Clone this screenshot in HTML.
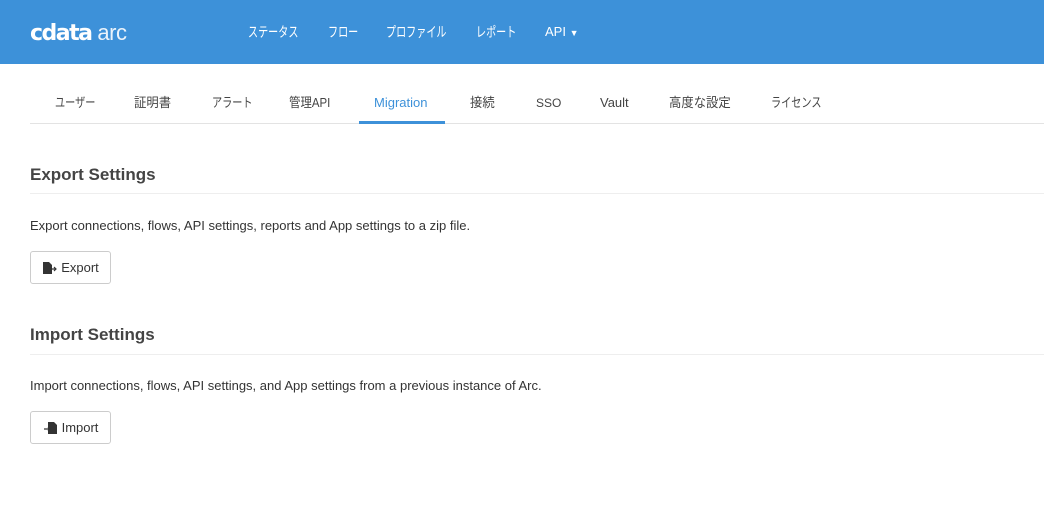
<!DOCTYPE html>
<html><head><meta charset="utf-8"><style>
*{margin:0;padding:0;box-sizing:border-box}
body{width:1044px;height:506px;background:#fff;font-family:"Liberation Sans","Noto Sans CJK JP",sans-serif;color:#333;position:relative;overflow:hidden}
.hdr{position:absolute;left:0;top:0;width:1044px;height:64px;background:#3d91d9}
.logo{position:absolute;left:30px;top:18px;color:#fff;font-size:23px;letter-spacing:-0.5px;line-height:28px}
.logo b{font-weight:bold;font-family:"DejaVu Sans",sans-serif;letter-spacing:-1.5px;font-size:22px}
.logo span{font-weight:normal;font-size:22px;color:#eaf3fb}
.nav{position:absolute;top:23px;color:#fff;font-size:14px;line-height:18px;white-space:nowrap;transform-origin:left center}
.cj{transform:scaleX(0.72)}
.tab{position:absolute;top:95px;font-size:13px;line-height:16px;color:#444;white-space:nowrap;transform-origin:left center}
.tc{transform:scaleX(0.78)}
.tk{transform:scaleX(0.95)}
.tabline{position:absolute;left:30px;top:123px;width:1014px;height:1px;background:#e3e3e3}
.act{position:absolute;left:359px;top:121px;width:86px;height:3px;background:#3d91d9}
h2{position:absolute;left:30px;font-size:17px;line-height:22px;font-weight:bold;color:#444}
.hr{position:absolute;left:30px;width:1014px;height:1px;background:#eee}
p{position:absolute;left:30px;font-size:13px;line-height:16px;color:#333}
.btn{position:absolute;left:30px;width:81px;height:33px;border:1px solid #ccc;border-radius:3px;font-size:13px;color:#333;display:flex;align-items:center;justify-content:center;gap:3px}
</style></head><body>
<div class="hdr">
<div class="logo"><b>cdata</b> <span>arc</span></div>
<div class="nav cj" style="left:248px">ステータス</div>
<div class="nav cj" style="left:328px">フロー</div>
<div class="nav cj" style="left:386px">プロファイル</div>
<div class="nav cj" style="left:476px">レポート</div>
<div class="nav" style="left:545px;font-size:13px">API <span style="font-size:9px">▼</span></div>
</div>
<div class="tab tc" style="left:55px">ユーザー</div>
<div class="tab tk" style="left:134px">証明書</div>
<div class="tab tc" style="left:212px">アラート</div>
<div class="tab tk" style="left:289px;transform:scaleX(0.88)">管理API</div>
<div class="tab" style="left:374px;color:#3d91d9">Migration</div>
<div class="tab tk" style="left:470px">接続</div>
<div class="tab" style="left:536px;font-size:12px">SSO</div>
<div class="tab" style="left:600px">Vault</div>
<div class="tab tk" style="left:669px">高度な設定</div>
<div class="tab tc" style="left:771px">ライセンス</div>
<div class="tabline"></div><div class="act"></div>

<h2 style="top:164px">Export Settings</h2>
<div class="hr" style="top:193px"></div>
<p style="top:218px">Export connections, flows, API settings, reports and App settings to a zip file.</p>
<div class="btn" style="top:251px"><svg width="16" height="14" viewBox="0 0 16 14"><path d="M1 1h6l3 3v9H1z" fill="#333"/><path d="M10 8h4M12 6l2 2-2 2" stroke="#333" stroke-width="1.2" fill="none"/></svg>Export</div>

<h2 style="top:324px">Import Settings</h2>
<div class="hr" style="top:354px"></div>
<p style="top:378px">Import connections, flows, API settings, and App settings from a previous instance of Arc.</p>
<div class="btn" style="top:411px"><svg width="16" height="14" viewBox="0 0 16 14"><path d="M5 1h6l3 3v9H5z" fill="#333"/><path d="M1 8h6M5 6l2 2-2 2" stroke="#333" stroke-width="1.2" fill="none"/></svg>Import</div>
</body></html>
